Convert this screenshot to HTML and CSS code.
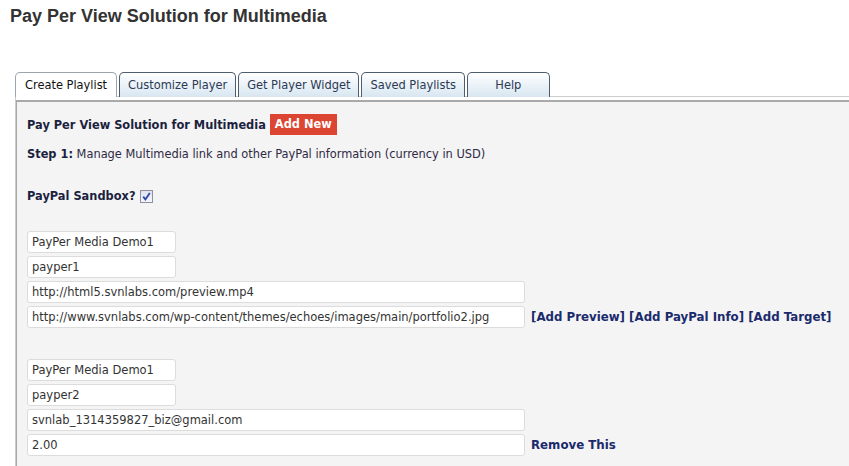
FILE: index.html
```html
<!DOCTYPE html>
<html>
<head>
<meta charset="utf-8">
<link rel="stylesheet" href="styles.css">
</head>
<body>
<div class="wrap">
  <h2 class="page-title">Pay Per View Solution for Multimedia</h2>
  <div class="tabs-area">
    <ul class="tabs">
      <li class="tab active">Create Playlist</li>
      <li class="tab">Customize Player</li>
      <li class="tab">Get Player Widget</li>
      <li class="tab">Saved Playlists</li>
      <li class="tab help">Help</li>
    </ul>
    <div class="frame">
      <div class="panel">
        <div class="panel-head">
          <span class="panel-title">Pay Per View Solution for Multimedia</span>
          <span class="btn-add">Add New</span>
        </div>
        <p class="step"><b>Step 1:</b> Manage Multimedia link and other PayPal information (currency in USD)</p>
        <p class="sandbox"><b>PayPal Sandbox?</b>
          <span class="checkbox"><svg width="9" height="9" viewBox="0 0 9 9"><path d="M1.2 4.6 L3.4 7.4 L7.8 1" fill="none" stroke="#2d47a8" stroke-width="1.8"/></svg></span>
        </p>
        <div class="group">
          <input class="field short" type="text" value="PayPer Media Demo1" readonly>
          <input class="field short" type="text" value="payper1" readonly>
          <input class="field long" type="text" value="http://html5.svnlabs.com/preview.mp4" readonly>
          <div class="row">
            <input class="field long" type="text" value="http://www.svnlabs.com/wp-content/themes/echoes/images/main/portfolio2.jpg" readonly>
            <span class="links">[Add Preview] [Add PayPal Info] [Add Target]</span>
          </div>
        </div>
        <div class="group">
          <input class="field short" type="text" value="PayPer Media Demo1" readonly>
          <input class="field short" type="text" value="payper2" readonly>
          <input class="field long" type="text" value="svnlab_1314359827_biz@gmail.com" readonly>
          <div class="row">
            <input class="field long" type="text" value="2.00" readonly>
            <span class="links">Remove This</span>
          </div>
        </div>
      </div>
    </div>
  </div>
</div>
</body>
</html>
```

FILE: styles.css
```css
html, body {
  margin: 0;
  padding: 0;
  background: #fff;
}
body {
  font-family: "DejaVu Sans", Verdana, sans-serif;
  font-size: 11.4px;
  color: #333;
  overflow: hidden;
  height: 466px;
}
.wrap {
  padding: 0 0 0 10px;
}
.page-title {
  margin: 0;
  padding-top: 5px;
  height: 72px;
  font-family: "Liberation Sans", Arial, sans-serif;
  font-size: 18px;
  font-weight: bold;
  color: #333;
  line-height: 22px;
  box-sizing: border-box;
}
.tabs-area {
  margin-left: 5px;
}
.tabs {
  list-style: none;
  margin: 0;
  padding: 0;
  display: flex;
  gap: 2px;
  height: 24px;
  border-bottom: 1px solid #ccc;
}
.tab {
  box-sizing: border-box;
  height: 25px;
  padding: 0 8px;
  border: 1px solid #4d5d6e;
  border-bottom: none;
  border-radius: 5px 5px 0 0;
  background: linear-gradient(#ffffff, #d8e6f1);
  font-family: "DejaVu Sans Condensed", "DejaVu Sans", sans-serif;
  font-size: 12.7px;
  line-height: 24px;
  color: #2b3a55;
  text-align: center;
  white-space: nowrap;
}
.tab.active {
  background: #fff;
  color: #111;
  border-color: #9aa5b0;
  padding: 0 9px;
}
.tab.help {
  min-width: 83px;
}
.frame {
  border-left: 1px solid #ccc;
  padding-top: 3px;
}
.panel {
  background: #f4f4f4;
  border-top: 2px solid #a9a9a9;
  border-left: 1px solid #a9a9a9;
  padding: 12px 10px 12px 10px;
}
.panel-head {
  display: flex;
  align-items: center;
  gap: 4px;
  height: 21px;
}
.panel-title {
  font-weight: bold;
  color: #1c1f3f;
}
.btn-add {
  background: #dc4532;
  color: #fff;
  font-weight: bold;
  font-size: 11.4px;
  padding: 0 5px;
  height: 21px;
  line-height: 21px;
}
.step {
  margin: 12px 0 0 0;
  line-height: 14px;
  color: #2f2a45;
}
.step b {
  color: #1c1f3f;
}
.sandbox {
  margin: 28px 0 0 0;
  display: flex;
  align-items: center;
  gap: 4px;
  height: 14px;
}
.sandbox b {
  color: #1c1f3f;
}
.checkbox {
  box-sizing: border-box;
  width: 13px;
  height: 13px;
  border: 1px solid #8f8f9f;
  background: linear-gradient(#dfe3ee, #f4f6fb);
  display: flex;
  align-items: center;
  justify-content: center;
}
.group {
  display: flex;
  flex-direction: column;
  gap: 3px;
  margin-top: 28px;
}
.group + .group {
  margin-top: 31px;
}
.field {
  box-sizing: border-box;
  height: 22px;
  border: 1px solid #dcdcdc;
  border-radius: 3px;
  background: #fff;
  padding: 0 4px;
  font-family: "DejaVu Sans", Verdana, sans-serif;
  font-size: 11.5px;
  color: #333;
  margin: 0;
  outline: none;
}
.field.short {
  width: 149px;
}
.field.long {
  width: 498px;
}
.row {
  display: flex;
  align-items: center;
  gap: 6px;
}
.links {
  font-weight: bold;
  font-size: 11.8px;
  color: #1a2a6c;
  white-space: nowrap;
}
```
